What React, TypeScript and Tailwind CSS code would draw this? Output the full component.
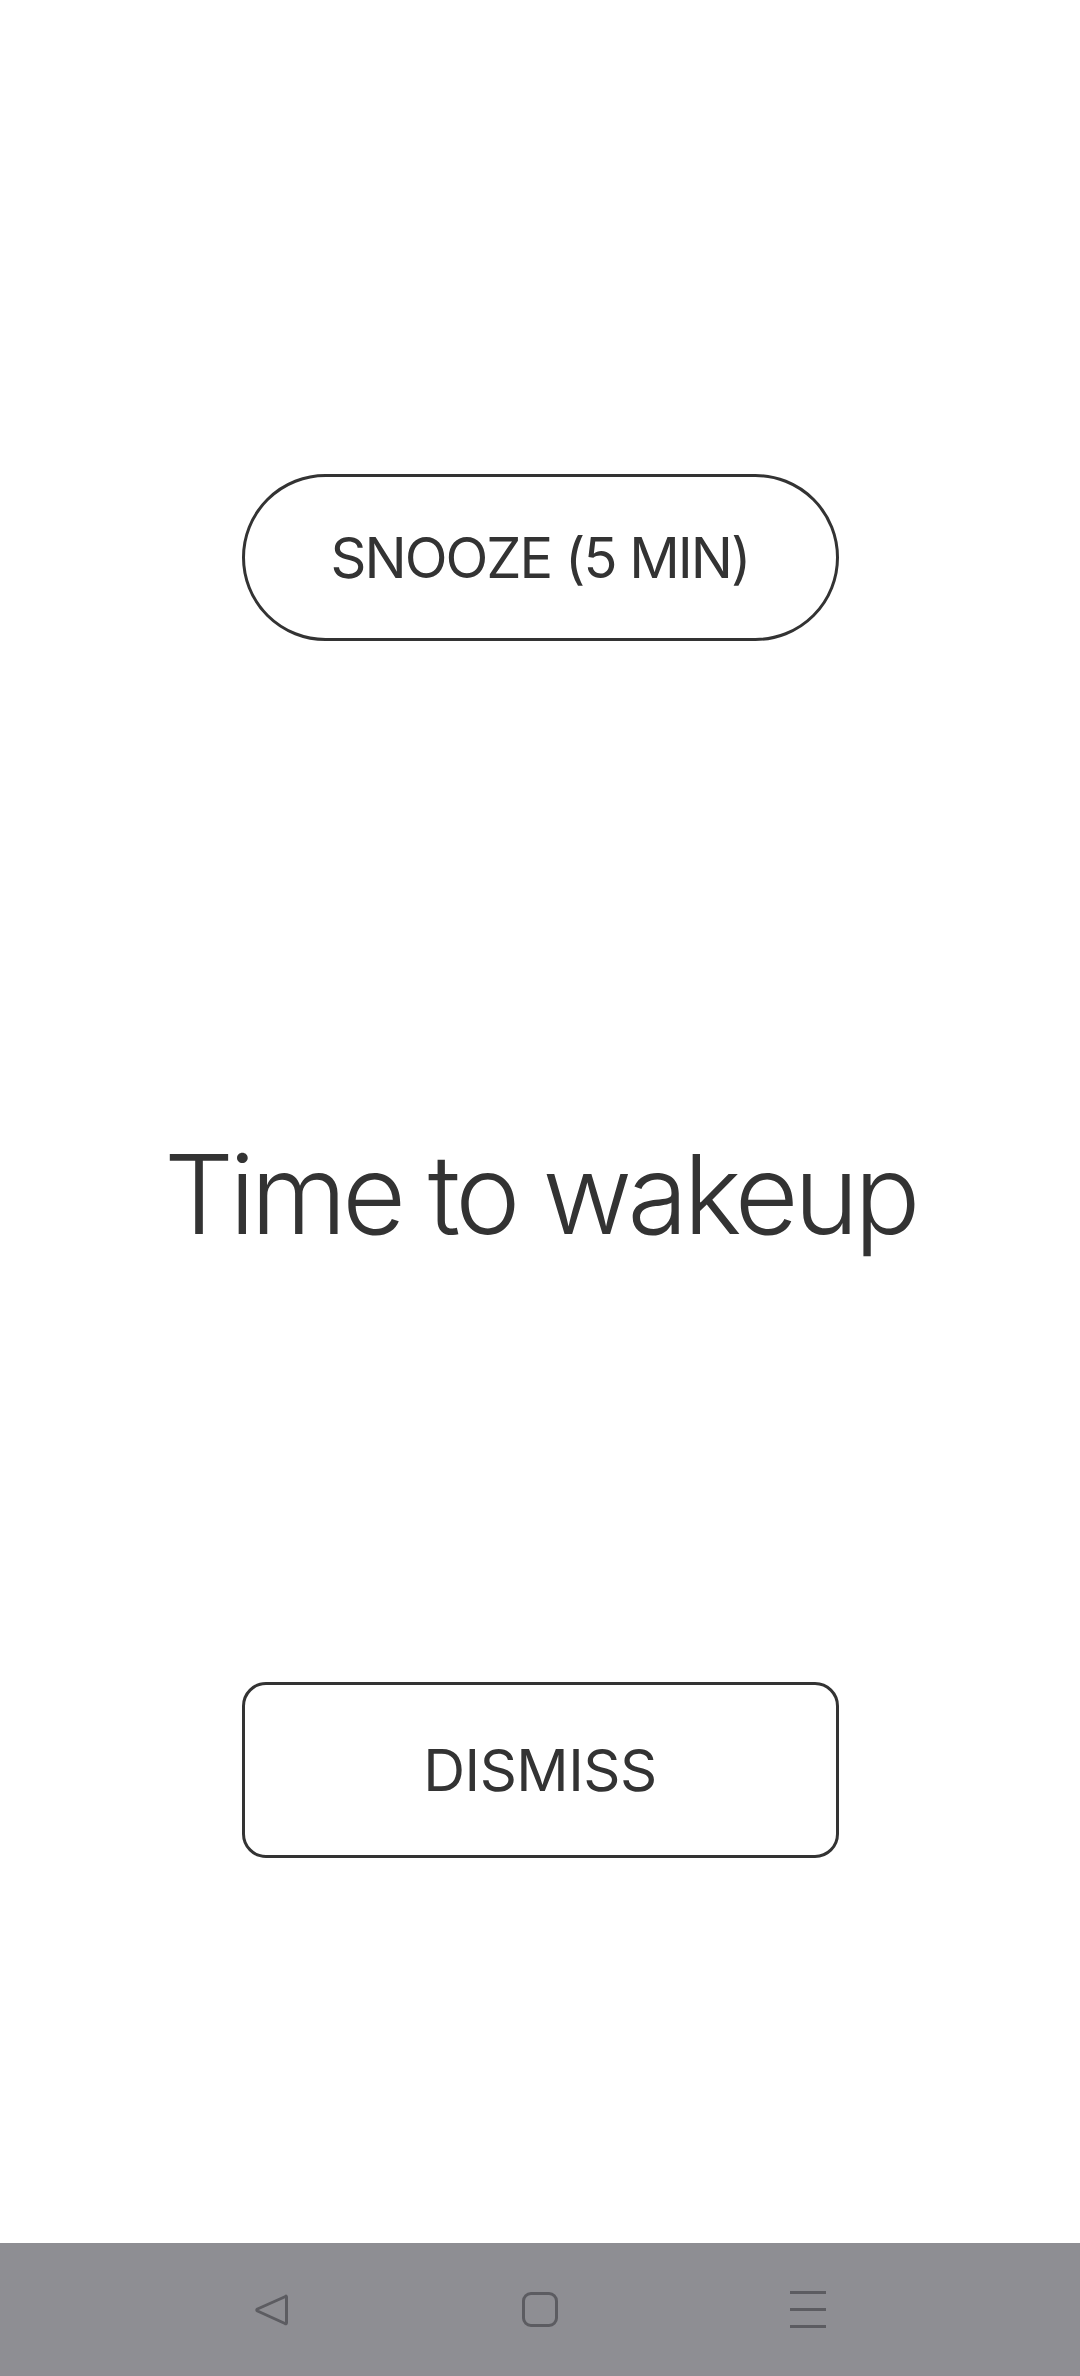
import React from 'react';

const font = { fontFamily: 'Inter, "Noto Sans", sans-serif' };

const NavBar: React.FC = () => (
  <div className="h-[133px] w-full bg-[#8e8e93] flex items-center justify-center">
    <div className="w-[268px] flex justify-center">
      <svg width="36" height="36" viewBox="0 0 36 36" fill="none">
        <path
          d="M31.5 4.5 Q32.5 3.5 32.5 5.5 L32.5 30.5 Q32.5 32.5 31 31.5 L3.5 19 Q2 18 3.5 17 Z"
          stroke="#5c5c61"
          strokeWidth="3"
          strokeLinejoin="round"
        />
      </svg>
    </div>
    <div className="w-[268px] flex justify-center">
      <div className="w-[36px] h-[35px] rounded-[9px] border-[3px] border-[#5c5c61]" />
    </div>
    <div className="w-[268px] flex justify-center">
      <div className="w-[36px] flex flex-col gap-[14px]">
        <div className="h-[3px] bg-[#5c5c61]" />
        <div className="h-[3px] bg-[#5c5c61]" />
        <div className="h-[3px] bg-[#5c5c61]" />
      </div>
    </div>
  </div>
);

export default function App() {
  return (
    <div className="w-[1080px] h-[2376px] bg-white flex flex-col" style={font}>
      <main className="flex-1 flex flex-col items-center pt-[474px] text-[#333333]">
        <button className="w-[597px] h-[167px] rounded-full border-[3px] border-[#333333] flex items-center justify-center text-[56px] leading-none tracking-[-2px]">
          SNOOZE (5 MIN)
        </button>
        <h1 className="mt-[498px] text-[110px] leading-none font-light tracking-[-4.5px]">
          Time to wakeup
        </h1>
        <button className="mt-[433px] w-[597px] h-[176px] rounded-[24px] border-[3px] border-[#333333] flex items-center justify-center text-[58px] leading-none tracking-[-0.5px]">
          DISMISS
        </button>
      </main>
      <NavBar />
    </div>
  );
}
